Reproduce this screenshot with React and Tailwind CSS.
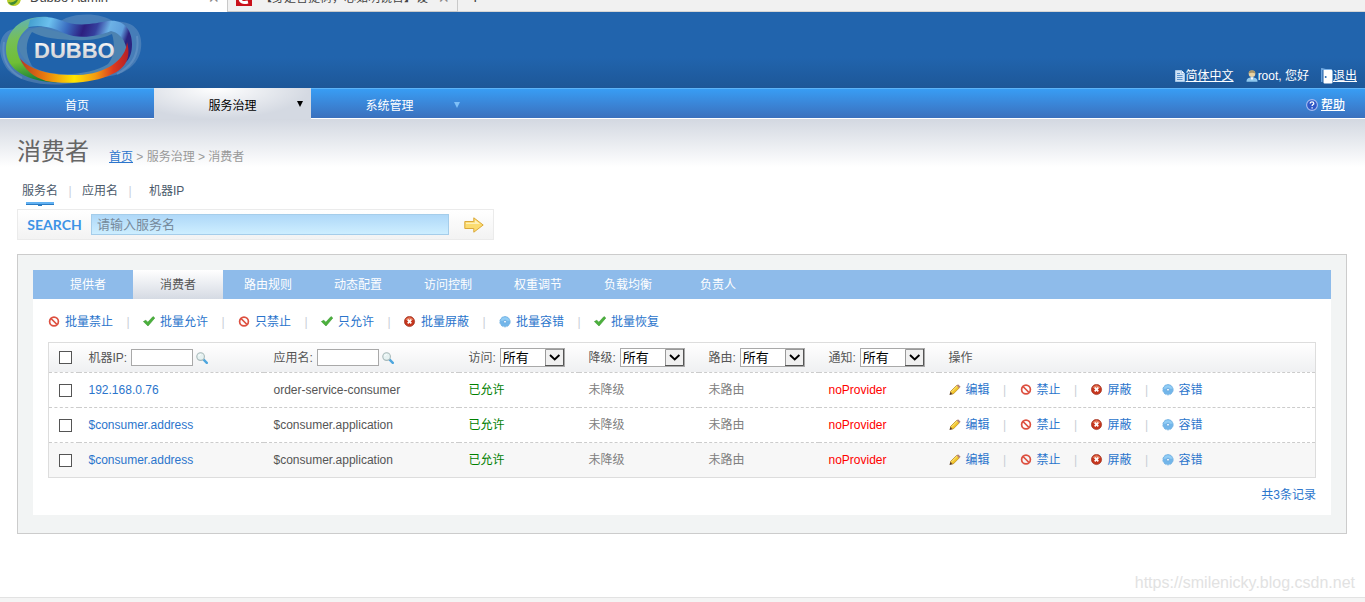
import { useState } from "react"

const navItems = [
  { label: "首页" },
  { label: "服务治理", active: true, menu: true },
  { label: "系统管理", menu: true },
]

const searchTypes = ["服务名", "应用名", "机器IP"]

const tabs = ["提供者", "消费者", "路由规则", "动态配置", "访问控制", "权重调节", "负载均衡", "负责人"]

const batchActions = [
  { icon: "forbid", label: "批量禁止" },
  { icon: "allow", label: "批量允许" },
  { icon: "forbid", label: "只禁止" },
  { icon: "allow", label: "只允许" },
  { icon: "shield", label: "批量屏蔽" },
  { icon: "tolerant", label: "批量容错" },
  { icon: "allow", label: "批量恢复" },
]

const rowActions = [
  { icon: "edit", label: "编辑" },
  { icon: "forbid", label: "禁止" },
  { icon: "shield", label: "屏蔽" },
  { icon: "tolerant", label: "容错" },
]

const filters = [
  { name: "access", label: "访问" },
  { name: "mock", label: "降级" },
  { name: "route", label: "路由" },
  { name: "notify", label: "通知" },
]

const consumers = [
  { id: 1, address: "192.168.0.76", application: "order-service-consumer" },
  { id: 2, address: "$consumer.address", application: "$consumer.application" },
  { id: 3, address: "$consumer.address", application: "$consumer.application" },
]

function Icon({ name }) {
  return (
    <svg className="size-3 shrink-0" viewBox="0 0 12 12" aria-hidden="true">
      {name === "forbid" && (
        <g fill="none" stroke="#dd5040" strokeWidth="1.7">
          <circle cx="6" cy="5.5" r="4.4" />
          <path d="M3 2.5l6 6" />
        </g>
      )}
      {name === "allow" && (
        <path d="M0.4 5.6l2.4-1.4 2 2L10 .6l1.8 1.4-6.8 8z" fill="#4bb03c" stroke="#3a9a30" strokeWidth="0.6" />
      )}
      {name === "shield" && (
        <>
          <circle cx="5.5" cy="5.5" r="5.1" fill="#c5361d" stroke="#96220f" strokeWidth="0.6" />
          <path d="M1.5 3.700a4.400 4.400 0 0 1 8 0q-4 1.600-8 0z" fill="#e57b5c" />
          <path d="M3.700 3.700l3.600 3.600M7.300 3.700l-3.600 3.600" stroke="#fff" strokeWidth="1.700" />
        </>
      )}
      {name === "tolerant" && (
        <>
          <circle cx="6" cy="5.700" r="5.100" fill="#72b6ea" stroke="#78b4e4" strokeWidth="1" strokeDasharray="2.600 .6" />
          <path d="M1.600 4.700a4.500 4.500 0 0 1 8.800 0z" fill="#92cdf5" />
          <circle cx="6" cy="5.700" r="1.500" fill="#e9f5fd" stroke="#5ba0dc" strokeWidth="0.800" />
        </>
      )}
      {name === "edit" && (
        <>
          <path d="M.5 11l.8-3.200 2.400 2.400z" fill="#5b3a1c" />
          <path d="M1.400 7.600L7.600 1.400l2.600 2.600-6.200 6.200z" fill="#f2c62c" stroke="#b98414" strokeWidth="0.700" />
          <path d="M2.600 7.800L8.400 2" stroke="#fdeb91" />
          <path d="M7.800 1.400l1.200-1.200 2.600 2.600-1.200 1.200z" fill="#b07f78" />
        </>
      )}
      {name === "search" && (
        <>
          <path d="M7.400 7.400l3.400 3.400" stroke="#4ea6de" strokeWidth="2.400" strokeLinecap="round" />
          <circle cx="4.600" cy="4.600" r="3.800" fill="#e6f2f2" stroke="#a8b9b9" strokeWidth="1.100" />
          <path d="M2.600 4.200q.6-1.600 2.200-1.700" stroke="#fff" fill="none" />
        </>
      )}
      {name === "page" && (
        <>
          <path d="M1.500.5h6l3 3v8h-9z" fill="#cfe2f5" stroke="#a7c8e8" />
          <path d="M7.500.5v3h3" fill="#fff" stroke="#8db5dd" strokeWidth="0.700" />
          <path d="M3 3.500h3M3 5.500h5.500M3 7.500h5.500M3 9.500h5.500" stroke="#5b93cc" />
        </>
      )}
      {name === "user" && (
        <>
          <path d="M.5 11.800c0-3.200 1.700-4.400 5.500-4.400s5.500 1.200 5.500 4.400z" fill="#8fc8ee" />
          <path d="M4.400 7.200l1.600 3 1.600-3z" fill="#fff" />
          <circle cx="6" cy="3.800" r="3.300" fill="#e9d3a4" />
          <path d="M2.700 3.600a3.300 3.300 0 0 1 6.600 0q-3.200-1.800-6.600 0z" fill="#a79569" />
        </>
      )}
      {name === "help" && (
        <>
          <circle cx="6" cy="6" r="5.400" fill="#3058c8" stroke="#a9bdf0" strokeWidth="1.100" />
          <path d="M4.200 4.600c0-2.400 3.600-2.200 3.600-.2 0 1.200-1.700 1.200-1.700 2.600M6.100 8.200v1.400" stroke="#fff" strokeWidth="1.300" fill="none" />
        </>
      )}
    </svg>
  )
}

function DoorIcon() {
  return (
    <svg className="h-4 w-3 shrink-0" viewBox="0 0 12 16" aria-hidden="true">
      <path d="M.8 14V.8l4 .8h6" fill="none" stroke="#7db4ea" strokeWidth="1.200" />
      <path d="M2.500 2h8a1 1 0 0 1 1 1v11.500a1 1 0 0 1-1 1h-7a1 1 0 0 1-1-1z" fill="#fff" />
      <circle cx="4.700" cy="9" r="1" fill="#2b6bb0" />
    </svg>
  )
}

function Logo() {
  return (
    <svg className="h-[76px] w-36 shrink-0" viewBox="0 12 144 76" role="img" aria-label="Dubbo">
      <defs>
        <linearGradient id="green" x1="0.6" y1="0" x2="0.7" y2="1">
          <stop offset="0" stopColor="#62b3b0" />
          <stop offset="0.3" stopColor="#76bf56" />
          <stop offset="0.65" stopColor="#6fbe35" />
          <stop offset="1" stopColor="#0b7838" />
        </linearGradient>
        <linearGradient id="blue" x1="0" y1="0" x2="1" y2="0.15">
          <stop offset="0" stopColor="#3f9bcb" />
          <stop offset="0.22" stopColor="#6cc0ee" />
          <stop offset="0.4" stopColor="#3a6cc0" />
          <stop offset="0.56" stopColor="#2d1f80" />
          <stop offset="0.68" stopColor="#35409e" />
          <stop offset="0.8" stopColor="#6db2e6" />
          <stop offset="0.93" stopColor="#5f9fdc" />
          <stop offset="1" stopColor="#2b2480" />
        </linearGradient>
        <linearGradient id="warm" x1="0" y1="0" x2="1" y2="0">
          <stop offset="0" stopColor="#b33b20" />
          <stop offset="0.22" stopColor="#e8780f" />
          <stop offset="0.5" stopColor="#ffe600" />
          <stop offset="0.7" stopColor="#f39a12" />
          <stop offset="0.86" stopColor="#dd3a1e" />
          <stop offset="1" stopColor="#b51f28" />
        </linearGradient>
        <linearGradient id="silver" x1="0" y1="0" x2="0" y2="1">
          <stop offset="0" stopColor="#ffffff" />
          <stop offset="1" stopColor="#c4c6ca" />
        </linearGradient>
      </defs>
      <path
        d="M10 30C28 26 46 30 66 18C82 12 104 14 114 22C134 20 143 32 141 48C139 66 122 78 96 77C70 88 24 88 8 70C-3 56 -3 36 10 30Z"
        fill="#b7c6dd"
        fillOpacity="0.25"
      />
      <path
        d="M18 44C22 34 28 29 40 27L66 34C80 39 96 37 112 31C120 34 127 40 127 48C124 62 104 75 78 75C48 76 20 66 18 44Z"
        fill="#4d83b1"
      />
      <path
        d="M32 32C42 38 60 40 76 40C90 41 104 38 112 34C115 44 115 56 108 64C90 76 48 78 32 66C25 54 25 42 32 32Z"
        fill="#2063ab"
      />
      <path d="M4 42q-4 24 18 36M137 36q4 26-20 38" fill="none" stroke="#8fb2da" strokeOpacity="0.3" strokeWidth="2" />
      <path
        d="M48 17C22 15 6 30 6 50C6 70 28 82 58 82.500C40 79 22 70 18 54C14 38 26 24 48 19Z"
        fill="url(#green)"
      />
      <path
        d="M30 20C38 16 50 16 60 20C78 28 96 23 108 21C124 19 132 30 132 44C132 52 130 58 126 62C129 48 124 34 111 31C98 36 80 40 64 33C52 27 42 25 28 27Z"
        fill="url(#blue)"
      />
      <path
        d="M20 58C28 69 50 76 78 75C106 74 126 60 127 42C132 60 124 70 108 76C88 84 62 84 46 81C34 77 24 70 20 58Z"
        fill="url(#warm)"
      />
      <text
        x="34"
        y="58"
        fontFamily="'Liberation Sans', Arial, sans-serif"
        fontSize="22"
        fontWeight="bold"
        fill="url(#silver)"
      >
        DUBBO
      </text>
    </svg>
  )
}

function BrowserTabs() {
  return (
    <div className="flex h-3 items-end overflow-hidden bg-[#f1f1f1] text-[13px] text-[#444]">
      <div className="flex h-7 w-[227px] shrink-0 items-center bg-white pr-2 pl-1.5">
        <svg className="mr-2 size-4 shrink-0" viewBox="0 0 16 16" aria-hidden="true">
          <path d="M1 4q7-4 14 0v5q-1 7-8 7-6-1-6-6z" fill="#b9cf2a" />
          <path d="M2 12q6 2 11-5-2 8-8 8z" fill="#3f8b33" />
        </svg>
        <span className="flex-1 leading-4">Dubbo Admin</span>
        <button aria-label="关闭" className="text-[18px] leading-4 text-[#888]">×</button>
      </div>
      <div className="flex h-7 w-[231px] shrink-0 items-center border-x border-b border-[#c9c9c9] px-2">
        <svg className="mr-2 size-4 shrink-0" viewBox="0 0 16 16" aria-hidden="true">
          <path d="M0 0h16v16H0z" fill="#c9111b" />
          <path d="M12 5Q4 2 4 8t8 4" fill="none" stroke="#fff" strokeWidth="3" />
        </svg>
        <span className="mr-2 flex-1 overflow-hidden text-[12px] leading-4 whitespace-nowrap">
          【身是菩提树，心如明镜台】设
        </span>
        <button aria-label="关闭" className="text-[18px] leading-4 text-[#888]">×</button>
      </div>
      <div className="flex h-7 flex-1 items-center border-b border-[#d5d5d5] pl-3">
        <button aria-label="新标签页" className="text-[18px] leading-4">+</button>
      </div>
    </div>
  )
}

function Header() {
  return (
    <header>
      <div className="flex justify-between bg-linear-to-b from-[#2164ad] from-60% to-[#1d5798]">
        <Logo />
        <div className="flex items-end gap-3 pr-2 pb-[3px] text-white">
          <a href="#lang" className="flex items-center">
            <Icon name="page" />
            <span className="underline">简体中文</span>
          </a>
          <span className="flex items-center">
            <Icon name="user" />
            root, 您好
          </span>
          <a href="#logout" className="flex items-center">
            <DoorIcon />
            <span className="underline">退出</span>
          </a>
        </div>
      </div>
      <nav className="flex h-[31px] border-t border-b border-t-[#5db4f8] border-b-white bg-linear-to-b from-[#389df4] to-[#3a70bd] text-white">
        {navItems.map((item) => (
          <a
            key={item.label}
            href="#nav"
            className={`relative flex items-center justify-center pt-1 ${item.menu ? "w-[157px]" : "w-[154px]"} ${
              item.active ? "-my-px bg-radial-[at_40%_0%] from-white to-[#d4d9e2] to-70% text-black" : ""
            }`}
          >
            {item.label}
            {item.menu && (
              <svg className="absolute top-[13px] right-2 size-1.5" viewBox="0 0 6 6" aria-hidden="true">
                <path d="M0 0h6L3 6z" fill={item.active ? "#000" : "#7fc0f8"} />
              </svg>
            )}
          </a>
        ))}
        <a href="#help" className="ml-auto flex items-center gap-[3px] pt-[3px] pr-5">
          <Icon name="help" />
          <span className="font-medium underline">帮助</span>
        </a>
      </nav>
    </header>
  )
}

function SearchBar() {
  return (
    <>
      <ul className="mt-3.5 flex h-[27px] pl-[5px]">
        {searchTypes.map((type, index) => (
          <li key={type} className="flex last:gap-[7px]">
            {index > 0 && <span className="w-6 text-center text-[#c8cfdc]">|</span>}
            <a href="#type" className="flex flex-col items-center text-[#4b5a6b]">
              {type}
              {index === 0 && (
                <svg className="mt-0.5 h-1 w-7 shrink-0" viewBox="0 0 28 4" aria-hidden="true">
                  <path d="M0 0h28v2H0z" fill="#62b1f2" />
                  <path d="M0 2h28v1H0zM12 3h4v1h-4z" fill="#2a7cc4" />
                </svg>
              )}
            </a>
          </li>
        ))}
      </ul>
      <form
        className="flex h-[31px] w-[477px] items-center border border-[#ebebeb] bg-linear-to-b from-white to-[#f3f3f3]"
        onSubmit={(e) => e.preventDefault()}
      >
        <label htmlFor="keyword" className="w-[73px] text-center font-['Lato'] text-[14px] font-bold text-[#3d93e6]">
          SEARCH
        </label>
        <input
          id="keyword"
          placeholder="请输入服务名"
          className="h-[21px] w-[358px] border border-[#a5cdea] bg-linear-to-b from-[#afd8f8] to-[#cdeeff] px-[5px] text-[13px] text-[#666] outline-none placeholder:text-[#768a9c]"
        />
        <button type="submit" aria-label="搜索" className="ml-[15px]">
          <svg className="h-4 w-5" viewBox="0 0 20 16" aria-hidden="true">
            <path d="M.8 4.500h9V.8L19.200 8l-9.400 7.200v-3.700h-9z" fill="#fbdc71" stroke="#dba93a" strokeLinejoin="round" />
            <path d="M2 5.700h9V3l5 4H2z" fill="#fef0b8" />
          </svg>
        </button>
      </form>
    </>
  )
}

function ActionList({ actions }) {
  return (
    <div className="flex items-center">
      {actions.map((action, index) => (
        <div key={action.label} className="flex items-center">
          {index > 0 && <span className="w-[30px] text-center text-[#c9ced6]">|</span>}
          <a href="#action" className="flex items-center gap-[5px] text-[#2b75cc]">
            <Icon name={action.icon} />
            {action.label}
          </a>
        </div>
      ))}
    </div>
  )
}

function TextFilter({ id, label }) {
  return (
    <div className="flex items-center">
      <label htmlFor={id}>{label}:</label>
      <input id={id} className="mr-[3px] ml-1 h-[17px] w-[62px] border border-[#a9a9a9] bg-white px-1 outline-none" />
      <Icon name="search" />
    </div>
  )
}

function SelectFilter({ name, label }) {
  return (
    <div className="flex items-center">
      <label htmlFor={name}>{label}:</label>
      <div className="relative ml-1">
        <select
          id={name}
          className="block h-[19px] w-[65px] appearance-none border border-[#a9a9a9] bg-white pl-0.5 text-[13px] leading-4 text-black outline-none"
        >
          <option>所有</option>
        </select>
        <svg className="pointer-events-none absolute top-px right-px h-[17px] w-[19px]" viewBox="0 0 19 17" aria-hidden="true">
          <path d="M.5.5h18v16H.5z" fill="#f0f0f0" stroke="#999" />
          <path d="M18.500 0v16.500H0" fill="none" stroke="#555" />
          <path d="M5 6l4.700 4.500L14.400 6" fill="none" stroke="#000" strokeWidth="1.900" />
        </svg>
      </div>
    </div>
  )
}

function Checkbox({ label, checked, onChange }) {
  return (
    <input
      type="checkbox"
      aria-label={label}
      checked={checked}
      onChange={onChange}
      className="block size-[13px] appearance-none border border-[#555] bg-white checked:bg-[#2b75cc]"
    />
  )
}

function ConsumerTable() {
  const [selected, setSelected] = useState([])
  const allSelected = selected.length === consumers.length

  const toggle = (id) => {
    setSelected(selected.includes(id) ? selected.filter((s) => s !== id) : [...selected, id])
  }

  return (
    <table className="w-full table-fixed border-collapse border border-[#ddd] text-left">
      <colgroup>
        <col className="w-[30px]" />
        <col className="w-[185px]" />
        <col className="w-[195px]" />
        <col className="w-[120px]" />
        <col className="w-[120px]" />
        <col className="w-[120px]" />
        <col className="w-[120px]" />
        <col />
      </colgroup>
      <thead>
        <tr className="h-[30px] border-b border-dashed border-[#ccc] bg-linear-to-b from-white to-[#eff0f2]">
          <th className="px-2.5">
            <Checkbox
              label="全选"
              checked={allSelected}
              onChange={() => setSelected(allSelected ? [] : consumers.map((c) => c.id))}
            />
          </th>
          <th className="px-2.5 font-normal">
            <TextFilter id="address" label="机器IP" />
          </th>
          <th className="px-2.5 font-normal">
            <TextFilter id="application" label="应用名" />
          </th>
          {filters.map((filter) => (
            <th key={filter.name} className="px-2.5 font-normal">
              <SelectFilter name={filter.name} label={filter.label} />
            </th>
          ))}
          <th className="px-2.5 font-normal">操作</th>
        </tr>
      </thead>
      <tbody>
        {consumers.map((consumer) => (
          <tr
            key={consumer.id}
            className="h-[35px] border-b border-dashed border-[#ccc] last:border-solid last:border-[#ddd] last:bg-[#f7f7f7]"
          >
            <td className="px-2.5">
              <Checkbox
                label={consumer.address}
                checked={selected.includes(consumer.id)}
                onChange={() => toggle(consumer.id)}
              />
            </td>
            <td className="px-2.5">
              <a href="#consumer" className="text-[#2b75cc]">{consumer.address}</a>
            </td>
            <td className="px-2.5">{consumer.application}</td>
            <td className="px-2.5 text-[#008000]">已允许</td>
            <td className="px-2.5 text-[#808080]">未降级</td>
            <td className="px-2.5 text-[#808080]">未路由</td>
            <td className="px-2.5 text-[#ff0000]">noProvider</td>
            <td className="px-2.5">
              <ActionList actions={rowActions} />
            </td>
          </tr>
        ))}
      </tbody>
    </table>
  )
}

export default function App() {
  return (
    <div className="relative flex min-h-screen flex-col bg-white font-['Liberation_Sans','Noto_Sans_CJK_SC',sans-serif] text-[12px] leading-[18px] text-[#555]">
      <BrowserTabs />
      <Header />
      <main className="flex-1 bg-linear-to-b from-[#d3d8e1] to-white to-[48px] px-[17px] pt-[17px]">
        <div className="flex items-end gap-5">
          <h1 className="text-[24px] leading-8 text-[#666]">消费者</h1>
          <p className="pb-0.5 text-[#999]">
            <a href="#home" className="text-[#2b75cc] underline">首页</a> &gt; 服务治理 &gt; 消费者
          </p>
        </div>
        <SearchBar />
        <section className="mt-3.5 mr-px border border-[#ccc] bg-[#f2f4f4] px-[15px] pt-[15px] pb-[18px]">
          <nav className="flex h-[29px] bg-[#8ebbea] pl-2.5 text-white">
            {tabs.map((tab) => (
              <a
                key={tab}
                href="#tab"
                className={`flex w-[90px] items-center justify-center ${
                  tab === "消费者" ? "bg-linear-to-b from-white to-[#d5dae3] text-[#555]" : ""
                }`}
              >
                {tab}
              </a>
            ))}
          </nav>
          <div className="bg-white px-[15px] pb-[11px]">
            <div className="pt-3.5 pb-[11px]">
              <ActionList actions={batchActions} />
            </div>
            <ConsumerTable />
            <p className="mt-2 text-right text-[#2b75cc]">共3条记录</p>
          </div>
        </section>
      </main>
      <p className="absolute right-2.5 bottom-2.5 text-[16px] text-[#e2e2e2]">https://smilenicky.blog.csdn.net</p>
      <footer className="h-[5px] border-t border-[#e2e2e2] bg-[#f4f4f4]" />
    </div>
  )
}
